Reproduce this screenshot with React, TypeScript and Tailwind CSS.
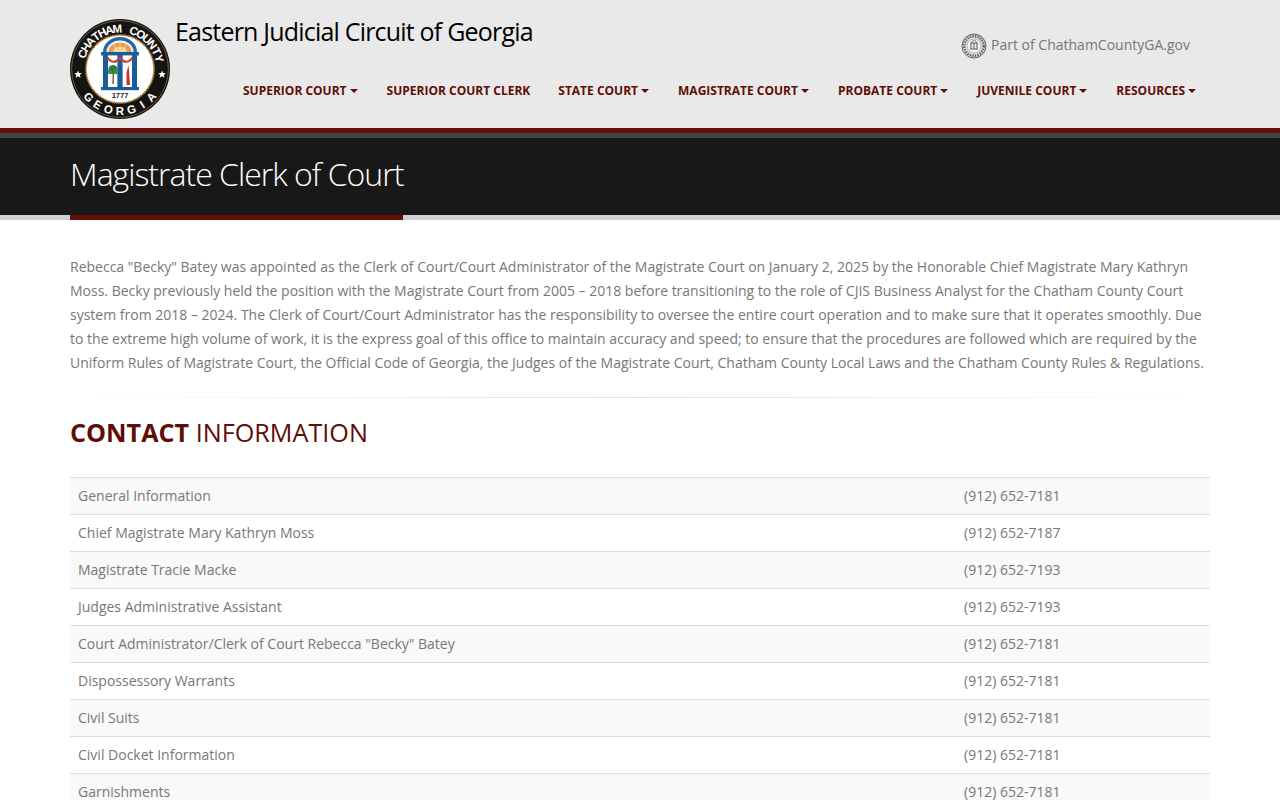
const navItems = [
  { label: "SUPERIOR COURT", caret: true },
  { label: "SUPERIOR COURT CLERK", caret: false },
  { label: "STATE COURT", caret: true },
  { label: "MAGISTRATE COURT", caret: true },
  { label: "PROBATE COURT", caret: true },
  { label: "JUVENILE COURT", caret: true },
  { label: "RESOURCES", caret: true },
];

const contacts = [
  ["General Information", "(912) 652-7181"],
  ["Chief Magistrate Mary Kathryn Moss", "(912) 652-7187"],
  ["Magistrate Tracie Macke", "(912) 652-7193"],
  ["Judges Administrative Assistant", "(912) 652-7193"],
  ['Court Administrator/Clerk of Court Rebecca "Becky" Batey', "(912) 652-7181"],
  ["Dispossessory Warrants", "(912) 652-7181"],
  ["Civil Suits", "(912) 652-7181"],
  ["Civil Docket Information", "(912) 652-7181"],
  ["Garnishments", "(912) 652-7181"],
];

// letters of the seal ring, as [letter, angle from top]
const topLetters: [string, number][] = [
  ["C", -68], ["H", -57.5], ["A", -47], ["T", -36.5], ["H", -26], ["A", -15.5], ["M", -4],
  ["C", 20], ["O", 31], ["U", 42], ["N", 53], ["T", 64], ["Y", 75],
];
const bottomLetters: [string, number][] = [
  ["G", -48], ["E", -32], ["O", -16], ["R", 0], ["G", 16], ["I", 32], ["A", 48],
];

const Seal = () => (
  <svg width="100" height="100" viewBox="0 0 100 100" className="shrink-0">
    <circle cx="50" cy="50" r="50" fill="#161412" />
    <circle cx="50" cy="50" r="48.4" fill="none" stroke="#b9a468" strokeWidth="0.5" />
    <circle cx="50" cy="50" r="34" fill="#fff" stroke="#b08a3a" strokeWidth="1.8" strokeDasharray="1.4 0.6" />
    <g fontFamily="'Liberation Sans', sans-serif" fontWeight="700" fontSize="11.5" fill="#fff" textAnchor="middle">
      {topLetters.map(([l, a]) => (
        <text key={a} x="50" y="13.6" transform={`rotate(${a} 50 50)`}>{l}</text>
      ))}
      {bottomLetters.map(([l, a]) => (
        <text key={a} x="50" y="96" transform={`rotate(${-a} 50 50)`}>{l}</text>
      ))}
    </g>
    <path d="M8 51.5l1.1 2.6 2.8.2-2.1 1.8.7 2.7-2.5-1.5-2.4 1.5.7-2.7-2.1-1.8 2.8-.2z" fill="#fff" />
    <path d="M92 51.5l1.1 2.6 2.8.2-2.1 1.8.7 2.7-2.5-1.5-2.4 1.5.7-2.7-2.1-1.8 2.8-.2z" fill="#fff" />
    {/* dome */}
    <path d="M33 33 A17 15 0 0 1 67 33 Z" fill="#2468a8" />
    <path d="M36.5 33 A13.5 11.5 0 0 1 63.5 33 Z" fill="#f3f3f3" />
    <path d="M38.5 33 A11.5 9.5 0 0 1 61.5 33 Z" fill="#e79a4c" />
    <path d="M43 33 A7 5.5 0 0 1 57 33 Z" fill="#f5d08a" />
    <path d="M50 23.5V33M44 25l3 8M56 25l-3 8" stroke="#fff" strokeWidth="0.5" />
    {/* entablature */}
    <rect x="31" y="33" width="38" height="3.4" fill="#1c5c9a" />
    {/* columns */}
    <rect x="33" y="36" width="5" height="32" fill="#1c5c9a" />
    <rect x="47.4" y="36" width="5.2" height="32" fill="#1c5c9a" />
    <rect x="62" y="36" width="5" height="32" fill="#1c5c9a" />
    {/* swag */}
    <path d="M37 38 Q43 47 50 39 Q57 47 63 38" fill="none" stroke="#cc3a32" strokeWidth="2.2" />
    {/* palm, figure */}
    <path d="M43 65 L43.5 52" stroke="#6a4a28" strokeWidth="1.3" />
    <circle cx="43" cy="50.5" r="4.6" fill="#2e7f3c" />
    <circle cx="40" cy="53" r="2.2" fill="#3f9148" />
    <circle cx="46" cy="53" r="2.2" fill="#3f9148" />
    <path d="M56.5 66 L56.5 54 L58.5 46 L59 52 L60 66 Z" fill="#c8352e" />
    {/* base */}
    <rect x="31" y="68" width="38" height="3.2" fill="#1c5c9a" />
    <text x="50" y="79" fontSize="7.5" fontWeight="700" fill="#222" textAnchor="middle" fontFamily="'Liberation Sans', sans-serif">1777</text>
  </svg>
);

const MiniSeal = () => (
  <svg width="26" height="26" viewBox="0 0 26 26" className="shrink-0">
    <circle cx="13" cy="13" r="12" fill="#dcdcdc" stroke="#666" strokeWidth="1" />
    <circle cx="13" cy="13" r="9.8" fill="none" stroke="#6a6a6a" strokeWidth="2.6" strokeDasharray="1.5 1.1" />
    <circle cx="13" cy="13" r="7" fill="#f2f2f2" stroke="#888" strokeWidth="0.5" />
    <path d="M9.5 10h7M10 10v5.5M13 10v5.5M16 10v5.5M9 16h8" stroke="#555" strokeWidth="1" fill="none" />
    <path d="M10.5 10 A2.5 2.5 0 0 1 15.5 10" stroke="#777" strokeWidth="0.8" fill="none" />
  </svg>
);

export default function App() {
  return (
    <div className="bg-white font-['Open_Sans',sans-serif] text-[14px] text-[#777]">
      <header className="h-[128px] bg-[#e9e9e9]">
        <div className="mx-auto flex h-full w-[1140px] items-start pt-[19px]">
          <Seal />
          <div className="min-w-0 flex-1">
            <div className="flex items-start justify-between">
              <div className="ml-[5px] mt-[-5px] text-[25px] leading-[34px] tracking-[-0.8px] text-black">
                Eastern Judicial Circuit of Georgia
              </div>
              <div className="mr-[20px] mt-[14px] flex items-center gap-[4px] text-[14px] leading-[24px] text-[#777]">
                <MiniSeal />
                <span className="mb-[2px]">Part of ChathamCountyGA.gov</span>
              </div>
            </div>
            <nav className="ml-[73px] mt-[20px] flex gap-[28px]">
              {navItems.map((item) => (
                <a key={item.label} href="#" className="flex items-center text-[12px] font-bold leading-[24px] text-[#5f0d07]">
                  {item.label}
                  {item.caret && (
                    <span className="ml-[3px] mr-[1px] h-0 w-0 border-x-[4px] border-t-[4px] border-x-transparent border-t-[#5f0d07]" />
                  )}
                </a>
              ))}
            </nav>
          </div>
        </div>
      </header>

      <div className="h-[5px] bg-[#660c06]" />
      <div className="h-[5px] bg-[#3f4444]" />

      <div className="h-[77px] bg-[#181818]">
        <div className="mx-auto w-[1140px]">
          <h1 className="pt-[14px] text-[32px] font-light leading-[44px] tracking-[-1px] text-white">
            Magistrate Clerk of Court
          </h1>
        </div>
      </div>
      <div className="h-[5px] bg-[#d0d0d0]">
        <div className="mx-auto w-[1140px]">
          <div className="h-[5px] w-[333px] bg-[#660c06]" />
        </div>
      </div>

      <main className="mx-auto w-[1140px] pt-[35px]">
        <p className="text-[14px] leading-[24px]">
          Rebecca "Becky" Batey was appointed as the Clerk of Court/Court Administrator of the Magistrate Court on January 2, 2025 by the Honorable Chief Magistrate Mary Kathryn Moss. Becky previously held the position with the Magistrate Court from 2005 – 2018 before transitioning to the role of CJIS Business Analyst for the Chatham County Court system from 2018 – 2024. The Clerk of Court/Court Administrator has the responsibility to oversee the entire court operation and to make sure that it operates smoothly. Due to the extreme high volume of work, it is the express goal of this office to maintain accuracy and speed; to ensure that the procedures are followed which are required by the Uniform Rules of Magistrate Court, the Official Code of Georgia, the Judges of the Magistrate Court, Chatham County Local Laws and the Chatham County Rules &amp; Regulations.
        </p>

        <hr className="mt-[22px] h-px border-0 bg-gradient-to-r from-transparent via-[#e0e0e0] to-transparent" />

        <h2 className="mt-[16px] text-[25.2px] font-normal leading-[36px] text-[#5f0d07]">
          <strong className="font-bold">CONTACT</strong> INFORMATION
        </h2>

        <table className="mt-[27px] w-full border-collapse text-[14px]">
          <tbody>
            {contacts.map(([name, phone], i) => (
              <tr key={name} className={i % 2 === 0 ? "bg-[#f9f9f9]" : "bg-white"}>
                <td className="h-[37px] border-t border-[#ddd] px-[8px] leading-[20px]">{name}</td>
                <td className="h-[37px] w-[254px] border-t border-[#ddd] px-[8px] leading-[20px]">{phone}</td>
              </tr>
            ))}
          </tbody>
        </table>
      </main>
    </div>
  );
}
